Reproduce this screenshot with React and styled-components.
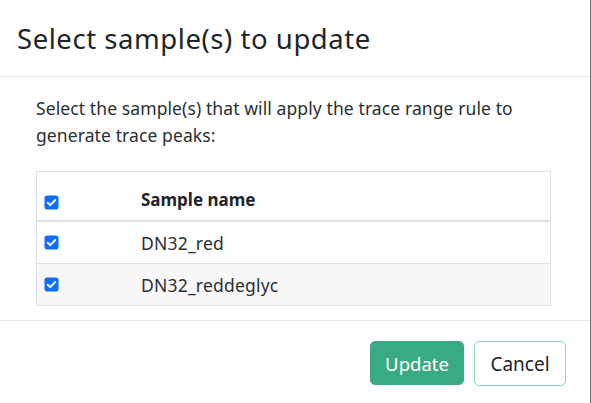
import React from 'react'
import styled, { createGlobalStyle } from 'styled-components'

const GlobalStyle = createGlobalStyle`
  body {
    margin: 0;
    background: #ffffff;
    font-family: "Noto Sans", "Open Sans", sans-serif;
    color: #212529;
  }
`

const samples = [
  { id: 1, name: 'DN32_red', striped: false },
  { id: 2, name: 'DN32_reddeglyc', striped: true },
]

const CheckBox = () => (
  <CheckIcon viewBox="0 0 16 16">
    <rect x="0.5" y="0.5" width="15" height="15" rx="3" fill="#0d6efd" />
    <path d="M4 8.3l2.6 2.5L12 5.4" fill="none" stroke="#fff" strokeWidth="2.2" strokeLinecap="round" strokeLinejoin="round" />
  </CheckIcon>
)

const App = () => {
  return (
    <>
      <GlobalStyle />
      <Modal>
        <Header>
          <Title>Select sample(s) to update</Title>
        </Header>
        <Body>
          <Intro>
            Select the sample(s) that will apply the trace range rule to generate trace peaks:
          </Intro>
          <Table>
            <HeadRow>
              <CheckCell>
                <CheckBox />
              </CheckCell>
              <HeadName>Sample name</HeadName>
            </HeadRow>
            {samples.map((s) => (
              <Row key={s.id} $striped={s.striped}>
                <CheckCell>
                  <CheckBox />
                </CheckCell>
                <NameCell>{s.name}</NameCell>
              </Row>
            ))}
          </Table>
        </Body>
        <Footer>
          <PrimaryButton>Update</PrimaryButton>
          <OutlineButton>Cancel</OutlineButton>
        </Footer>
      </Modal>
    </>
  )
}

export default App

const Modal = styled.div`
width: 590px;
height: 403px;
border-right: 1px solid #6c6f73;
display: flex;
flex-direction: column;
background: #fff;
`

const Header = styled.div`
height: 76px;
border-bottom: 1px solid #e4e6e8;
display: flex;
align-items: center;
padding: 0 17px;
`

const Title = styled.h5`
margin: 0;
font-size: 27.5px;
font-weight: 400;
color: #212529;
letter-spacing: 0.55px;
`

const Body = styled.div`
height: 244px;
border-bottom: 1px solid #e4e6e8;
padding: 18px 39px 0 36px;
box-sizing: border-box;
`

const Intro = styled.p`
margin: 0 0 22px 0;
font-size: 17.5px;
line-height: 27px;
letter-spacing: 0.1px;
color: #2b2f33;
`

const Table = styled.div`
border: 1px solid #dee2e6;
display: flex;
flex-direction: column;
`

const HeadRow = styled.div`
display: flex;
align-items: flex-end;
height: 50px;
border-bottom: 2px solid #dee2e6;
padding-bottom: 9px;
box-sizing: border-box;
`

const Row = styled.div`
display: flex;
align-items: center;
height: 41px;
background: ${(p) => (p.$striped ? '#f8f8f8' : '#fff')};
border-top: ${(p) => (p.$striped ? '1px solid #dee2e6' : 'none')};
`

const CheckCell = styled.div`
width: 97px;
padding-left: 7px;
padding-bottom: 1px;
display: flex;
align-items: center;
`

const CheckIcon = styled.svg`
width: 15px;
height: 15px;
display: block;
`

const HeadName = styled.div`
font-size: 17px;
font-weight: 700;
color: #212529;
`

const NameCell = styled.div`
font-size: 17.5px;
letter-spacing: 0.2px;
color: #2b2f33;
`

const Footer = styled.div`
flex: 1;
display: flex;
justify-content: flex-end;
align-items: flex-start;
gap: 10px;
padding: 20px 24px 0 0;
`

const PrimaryButton = styled.button`
width: 94px;
height: 44px;
border: 1px solid #3aaa84;
border-radius: 5px;
background: #3aaa84;
color: #fff;
font-family: "Noto Sans", "Open Sans", sans-serif;
font-size: 18.5px;
cursor: pointer;
`

const OutlineButton = styled.button`
width: 92px;
height: 45px;
border: 1px solid #8ed4bc;
border-radius: 5px;
background: #fff;
color: #212529;
font-family: "Noto Sans", "Open Sans", sans-serif;
font-size: 19px;
cursor: pointer;
`
